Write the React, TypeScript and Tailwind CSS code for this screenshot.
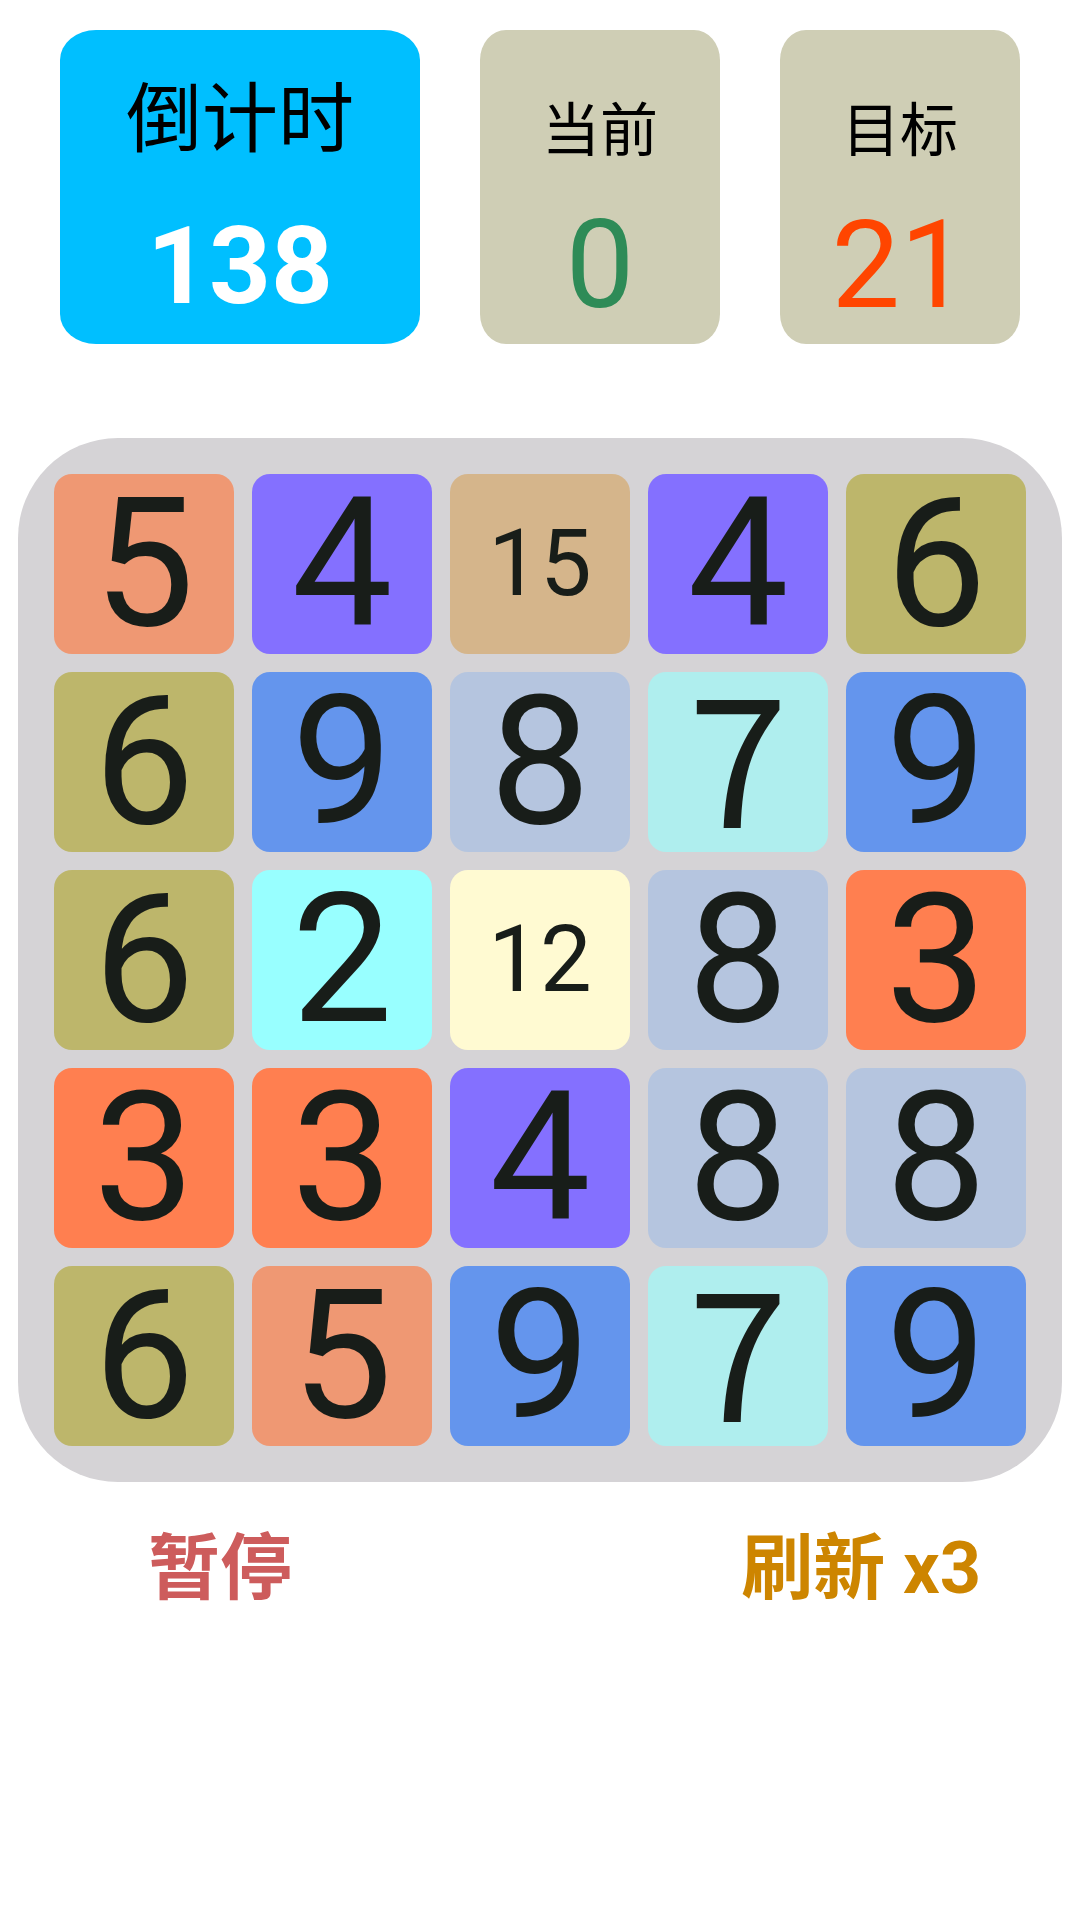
import React from 'react';

type Tile = { n: number; bg: string };

const tiles: Tile[] = [
  { n: 5, bg: 'bg-[#ef9873]' },
  { n: 4, bg: 'bg-[#8470ff]' },
  { n: 15, bg: 'bg-[#d5b58b]' },
  { n: 4, bg: 'bg-[#8470ff]' },
  { n: 6, bg: 'bg-[#bdb66b]' },

  { n: 6, bg: 'bg-[#bdb66b]' },
  { n: 9, bg: 'bg-[#6495ed]' },
  { n: 8, bg: 'bg-[#b5c5df]' },
  { n: 7, bg: 'bg-[#afeeee]' },
  { n: 9, bg: 'bg-[#6495ed]' },

  { n: 6, bg: 'bg-[#bdb66b]' },
  { n: 2, bg: 'bg-[#98ffff]' },
  { n: 12, bg: 'bg-[#fffad2]' },
  { n: 8, bg: 'bg-[#b5c5df]' },
  { n: 3, bg: 'bg-[#ff7f50]' },

  { n: 3, bg: 'bg-[#ff7f50]' },
  { n: 3, bg: 'bg-[#ff7f50]' },
  { n: 4, bg: 'bg-[#8470ff]' },
  { n: 8, bg: 'bg-[#b5c5df]' },
  { n: 8, bg: 'bg-[#b5c5df]' },

  { n: 6, bg: 'bg-[#bdb66b]' },
  { n: 5, bg: 'bg-[#ef9873]' },
  { n: 9, bg: 'bg-[#6495ed]' },
  { n: 7, bg: 'bg-[#afeeee]' },
  { n: 9, bg: 'bg-[#6495ed]' },
];

const digitClass = (n: number) => {
  if (n > 9) return 'text-[92px]';
  // the 7 in the reference has a curved stem, which Noto Sans CJK's Latin digits have
  if (n === 7) return "text-[180px] pb-[24px] font-['Noto_Sans_CJK_SC',sans-serif]";
  return 'text-[180px]';
};

const App = () => {
  return (
    <div className="w-[1080px] h-[1920px] bg-white font-['Roboto','Noto_Sans_CJK_SC',sans-serif] overflow-hidden">
      {/* Stats row */}
      <div className="flex gap-[60px] px-[60px] pt-[30px]">
        <div className="w-[360px] h-[314px] bg-[#00bfff] rounded-[36px_/_30px] flex flex-col items-center">
          <div className="mt-[52px] text-[76px] leading-none text-black">倒计时</div>
          <div className="mt-[54px] text-[108px] leading-none font-bold text-white">138</div>
        </div>
        <div className="w-[240px] h-[314px] bg-[#cfceb5] rounded-[26px_/_30px] flex flex-col items-center">
          <div className="mt-[72px] text-[58px] leading-none text-black">当前</div>
          <div className="mt-[45px] text-[122px] leading-none text-[#2e8b57]">0</div>
        </div>
        <div className="w-[240px] h-[314px] bg-[#cfceb5] rounded-[26px_/_30px] flex flex-col items-center">
          <div className="mt-[72px] text-[58px] leading-none text-black">目标</div>
          <div className="mt-[45px] text-[122px] leading-none text-[#ff4500]">21</div>
        </div>
      </div>

      {/* Board */}
      <div className="mt-[94px] mx-[18px] w-[1044px] bg-[#d5d3d6] rounded-[100px] p-[36px]">
        <div className="grid grid-cols-5 gap-[18px]">
          {tiles.map((t, i) => (
            <div
              key={i}
              className={`${t.bg} ${digitClass(t.n)} h-[180px] rounded-[18px] flex items-center justify-center leading-none text-[#181d19]`}
            >
              {t.n}
            </div>
          ))}
        </div>
      </div>

      {/* Controls */}
      <div className="mt-[51px] flex justify-between pl-[148px] pr-[99px] text-[72px] leading-none font-bold">
        <div className="text-[#cd5c5c]">暂停</div>
        <div className="text-[#cd8500]">刷新 x3</div>
      </div>
    </div>
  );
};

export default App;
